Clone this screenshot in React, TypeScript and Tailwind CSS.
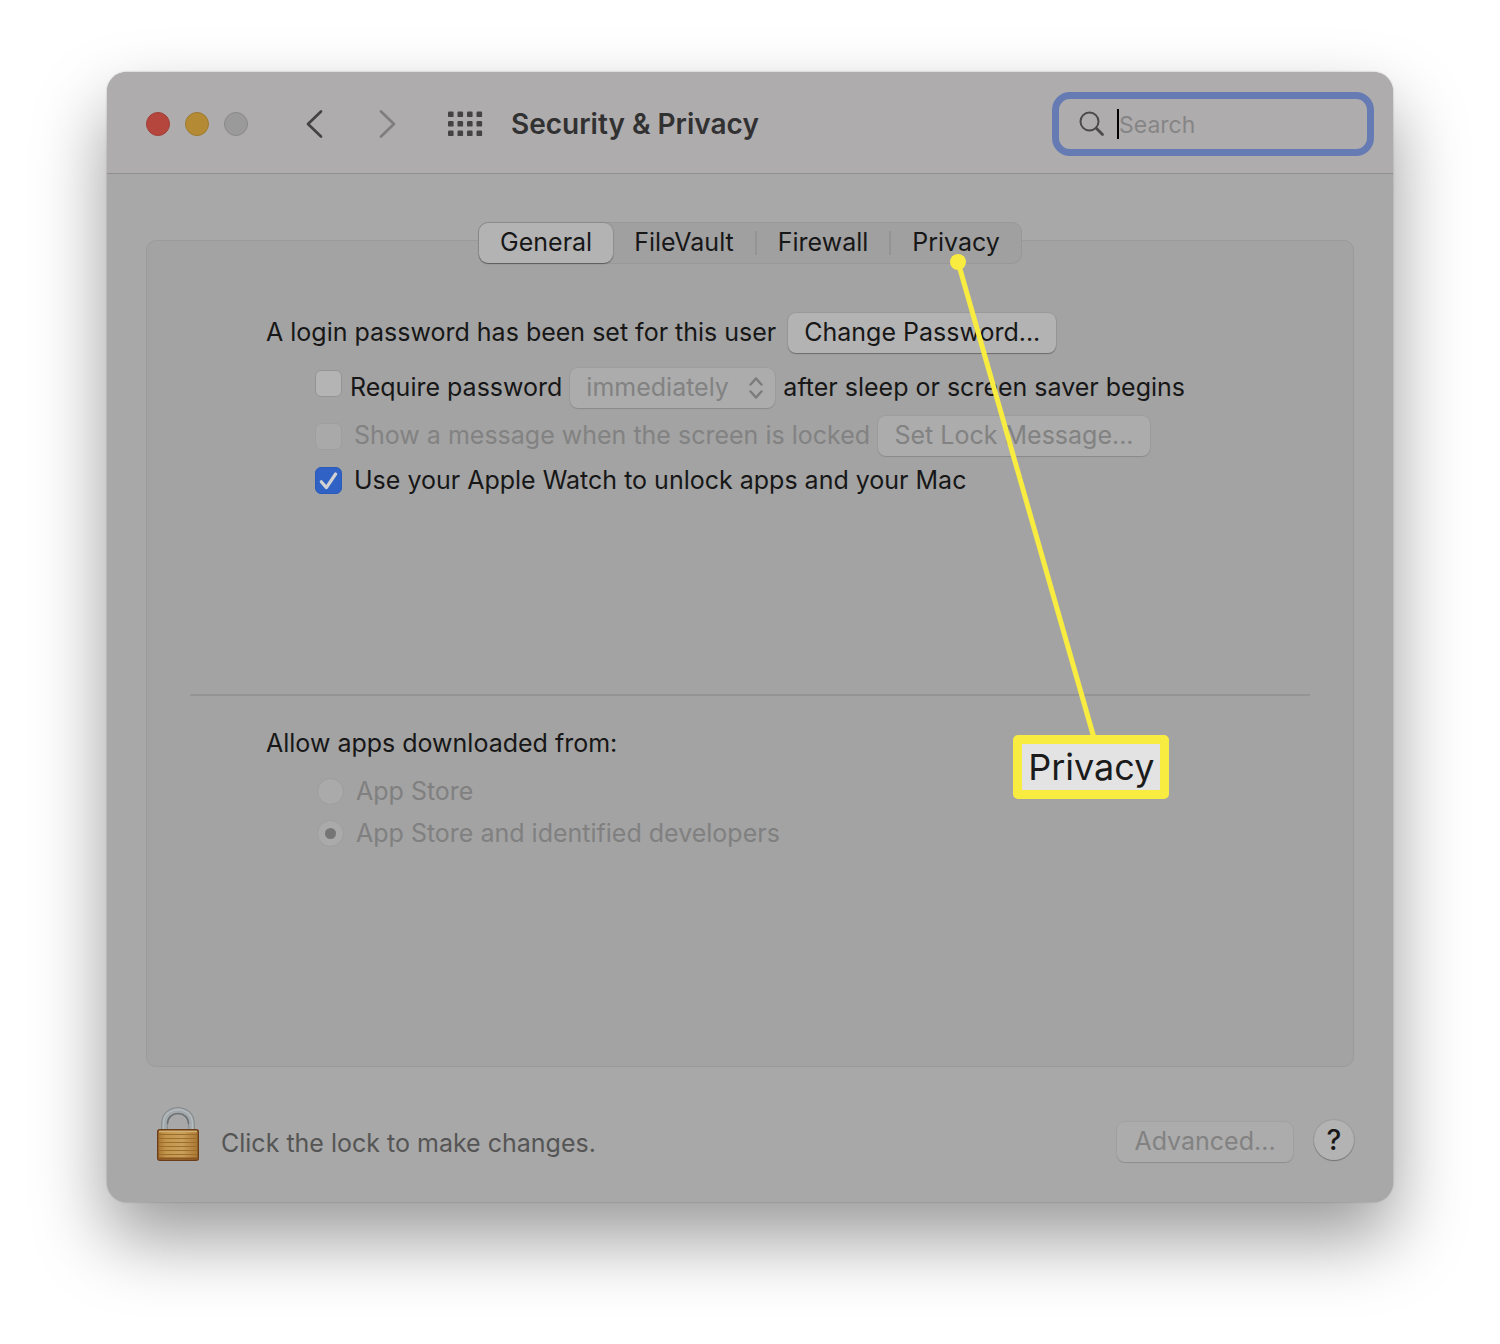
import { useState } from "react";
import clsx from "clsx";

const TABS = ["General", "FileVault", "Firewall", "Privacy"];

const SOURCES = [
    { id: "app-store", label: "App Store" },
    { id: "identified", label: "App Store and identified developers" },
];

function PushButton({ children, disabled, className }: { children: string; disabled?: boolean; className?: string }) {
    return (
        <button
            disabled={disabled}
            className={clsx(
                "h-10 pb-0.5 rounded-lg text-center whitespace-nowrap shrink-0",
                disabled
                    ? "bg-[#acacac] text-[#828282] shadow-[0_0_1px_1px_rgba(0,0,0,0.04),0_1px_1px_rgba(0,0,0,0.12)]"
                    : "bg-[#b3b3b3] text-[#171717] shadow-[0_0_1px_1px_rgba(0,0,0,0.06),0_1px_1px_rgba(0,0,0,0.3)]",
                className
            )}
        >
            {children}
        </button>
    );
}

function Checkbox({ id, checked, disabled, onChange, className }: { id: string; checked: boolean; disabled?: boolean; onChange?: () => void; className?: string }) {
    return (
        <span className={clsx("relative w-[27px] h-[27px] shrink-0", className)}>
            <input
                id={id}
                type="checkbox"
                checked={checked}
                disabled={disabled}
                onChange={onChange}
                className="block appearance-none w-[27px] h-[27px] rounded-md border border-[#949494] bg-[#b4b4b4] checked:bg-[#2f62c4] checked:border-[#2b5bb8] disabled:bg-[#a9a9a9] disabled:border-[#9e9e9e]"
            />
            {checked && (
                <svg viewBox="0 0 27 27" className="absolute inset-0 pointer-events-none" fill="none" stroke="#d2d2d2" strokeWidth="3.2" strokeLinecap="round" strokeLinejoin="round">
                    <path d="M6.3 14.8 L11.4 20.6 L20.6 7" />
                </svg>
            )}
        </span>
    );
}

function LockIcon() {
    return (
        <svg width="44" height="55" viewBox="0 0 44 55" fill="none">
            <defs>
                <linearGradient id="brass" x1="0" y1="0" x2="1" y2="0">
                    <stop offset="0" stopColor="#a87430" />
                    <stop offset="0.2" stopColor="#c2954b" />
                    <stop offset="0.6" stopColor="#c9a05a" />
                    <stop offset="1" stopColor="#a9752f" />
                </linearGradient>
            </defs>
            <path d="M8.5 24 V16.5 C8.5 -1 35.5 -1 35.5 16.5 V24" stroke="#7c8386" strokeWidth="6.4" />
            <path d="M8.5 24 V16.5 C8.5 -1 35.5 -1 35.5 16.5 V24" stroke="#a2a8ab" strokeWidth="4.8" />
            <path d="M7.5 24 V16.5 C7.5 -2 36.5 -2 36.5 16.5 V24" stroke="#b4babd" strokeWidth="1.5" />
            <path d="M11.6 17 C11.6 3.2 32.4 3.2 32.4 17" stroke="#676c6f" strokeWidth="1.4" />
            <rect x="1.7" y="22.7" width="40.6" height="30.6" rx="2" fill="url(#brass)" stroke="#6b3d18" strokeWidth="1.4" />
            <path d="M3 24.5 H41" stroke="#d3b070" strokeWidth="1.4" />
            <path d="M3 27.5 H41 M3 31.5 H41 M3 35.5 H41 M3 39.5 H41 M3 43.5 H41 M3 47.5 H41" stroke="#9c6d2e" strokeWidth="1" />
            <path d="M3 51.5 H41" stroke="#8a5521" strokeWidth="2" />
        </svg>
    );
}

function TitleBar() {
    return (
        <header className="flex items-center h-[102px] pt-0.5 pl-[39px] pr-[19px] bg-[#aeacad] border-b border-[#8f8f8f] rounded-t-[20px]">
            <div className="flex gap-[15px]">
                <button aria-label="Close" className="w-6 h-6 rounded-full bg-[#b5463e] border border-[#9f3f38]" />
                <button aria-label="Minimize" className="w-6 h-6 rounded-full bg-[#b48a34] border border-[#9d7a30]" />
                <button aria-label="Zoom" disabled className="w-6 h-6 rounded-full bg-[#9b9a9b] border border-[#8b8a8b]" />
            </div>
            <button aria-label="Back" className="ml-[57px]">
                <svg width="20" height="30" viewBox="0 0 20 30" fill="none" stroke="#444344" strokeWidth="2.7" strokeLinecap="round" strokeLinejoin="round">
                    <path d="M16 2.5 L3 15 L16 27.5" />
                </svg>
            </button>
            <button aria-label="Forward" disabled className="ml-[53px]">
                <svg width="20" height="30" viewBox="0 0 20 30" fill="none" stroke="#7f7e7f" strokeWidth="2.7" strokeLinecap="round" strokeLinejoin="round">
                    <path d="M3 2.5 L16 15 L3 27.5" />
                </svg>
            </button>
            <button aria-label="Show All" className="ml-[49px]">
                <svg width="36" height="26" viewBox="0 0 36 26" fill="#444344">
                    {[0, 1, 2].map(row =>
                        [0, 1, 2, 3].map(col => <rect key={`${row}-${col}`} x={1 + col * 9.5} y={0.5 + row * 9.5} width="5.6" height="5.6" rx="1.2" />)
                    )}
                </svg>
            </button>
            <h1 className="ml-7 text-[28px] leading-8 font-semibold text-[#323132] whitespace-nowrap">Security &amp; Privacy</h1>
            <label className="ml-auto flex items-center w-[322px] h-16 pl-5 border-[7px] border-[#667bb3] rounded-[18px] bg-[#aeacad]">
                <svg width="26" height="26" viewBox="0 0 26 26" fill="none" stroke="#4b4a4b" strokeLinecap="round" className="shrink-0">
                    <circle cx="10.5" cy="10.5" r="9" strokeWidth="2" />
                    <path d="M17.3 17.3 L23.5 23.5" strokeWidth="2.8" />
                </svg>
                <span className="w-0.5 h-[30px] ml-3 bg-black shrink-0" />
                <input type="search" aria-label="Search" placeholder="Search" className="min-w-0 flex-1 pt-0.5 bg-transparent outline-none text-[23px] text-[#171717] placeholder:text-[#868586]" />
            </label>
        </header>
    );
}

// Pointer that runs from the Privacy tab down to its enlarged label
function PrivacyCallout() {
    return (
        <div className="absolute top-[31px] left-[61px] w-[220px] pointer-events-none z-10">
            <svg width="160" height="484" viewBox="0 0 160 484" fill="none" className="block">
                <path d="M8 8 L144 484" stroke="#f9ec41" strokeWidth="5" />
                <circle cx="8" cy="8" r="8" fill="#f9ec41" />
            </svg>
            <div className="ml-[63px] -mt-[3px] w-[156px] h-16 border-[9px] border-[#f9ec41] rounded-[5px] bg-[#e3e3e3] flex items-center justify-center text-[36px] leading-[46px] text-[#1b1b1b]">
                Privacy
            </div>
        </div>
    );
}

export default function App() {
    const [tab, setTab] = useState("General");
    const [requirePassword, setRequirePassword] = useState(false);
    const [watchUnlock, setWatchUnlock] = useState(true);

    return (
        <div className="bg-white px-[107px] pt-[72px] pb-[142px] font-['Inter',sans-serif] text-[25px] leading-8 text-[#171717]">
            <div className="rounded-[20px] bg-[#a8a8a8] shadow-[0_0_2px_rgba(0,0,0,0.3),0_36px_72px_rgba(0,0,0,0.4)]">
                <TitleBar />

                <main className="px-[39px] pt-12">
                    <div className="relative flex justify-center">
                        <div role="tablist" className="flex h-[42px] rounded-[10px] bg-[#a0a0a0] border border-[#989898]">
                            {TABS.map((name, i) => (
                                <div key={name} className="relative flex items-center">
                                    {i > 1 && <span className="w-0.5 h-6 bg-[#949494]" />}
                                    <button
                                        role="tab"
                                        aria-selected={tab === name}
                                        onClick={() => setTab(name)}
                                        className={clsx(
                                            "h-10 px-[21px] pb-0.5 rounded-[9px]",
                                            tab === name && "bg-[#b3b3b3] shadow-[0_0_1px_1px_rgba(0,0,0,0.08),0_1px_1px_rgba(0,0,0,0.35)]"
                                        )}
                                    >
                                        {name}
                                    </button>
                                    {name === "Privacy" && <PrivacyCallout />}
                                </div>
                            ))}
                        </div>
                    </div>

                    <div className="-mt-6 min-h-[827px] rounded-[10px] border border-[#9b9b9b] bg-[#a3a3a3] pt-18">
                        <section className="min-h-[381px] pl-[119px]">
                            <div className="flex items-center">
                                <p className="pb-0.5 whitespace-nowrap">A login password has been set for this user</p>
                                <PushButton className="ml-3 w-[268px]">Change Password...</PushButton>
                            </div>
                            <div className="flex items-center pl-[49px] mt-[15px] whitespace-nowrap">
                                <Checkbox id="require" checked={requirePassword} onChange={() => setRequirePassword(!requirePassword)} className="self-start mt-0.5" />
                                <label htmlFor="require" className="ml-2 pb-0.5">Require password</label>
                                <span className="relative ml-2 shrink-0">
                                    <select
                                        disabled
                                        aria-label="Require password delay"
                                        className="block appearance-none w-[205px] h-10 pl-4 pb-0.5 rounded-lg bg-[#acacac] text-[#828282] opacity-100 shadow-[0_0_1px_1px_rgba(0,0,0,0.04),0_1px_1px_rgba(0,0,0,0.12)]"
                                    >
                                        <option>immediately</option>
                                    </select>
                                    <svg width="14" height="22" viewBox="0 0 14 22" fill="none" stroke="#7b7b7b" strokeWidth="2.4" strokeLinecap="round" strokeLinejoin="round" className="absolute right-3 top-[9px] pointer-events-none">
                                        <path d="M1.5 7.5 L7 1.5 L12.5 7.5 M1.5 14.5 L7 20.5 L12.5 14.5" />
                                    </svg>
                                </span>
                                <span className="ml-2 pb-0.5">after sleep or screen saver begins</span>
                            </div>
                            <div className="flex items-center pl-[49px] mt-2 whitespace-nowrap">
                                <Checkbox id="message" checked={false} disabled />
                                <label htmlFor="message" className="ml-3 pb-0.5 text-[#828282]">Show a message when the screen is locked</label>
                                <PushButton disabled className="ml-2 w-[272px]">Set Lock Message...</PushButton>
                            </div>
                            <div className="flex items-center pl-[49px] mt-2 whitespace-nowrap">
                                <Checkbox id="watch" checked={watchUnlock} onChange={() => setWatchUnlock(!watchUnlock)} />
                                <label htmlFor="watch" className="ml-3">Use your Apple Watch to unlock apps and your Mac</label>
                            </div>
                        </section>

                        <hr className="mx-[43px] border-t-2 border-[#949494]" />

                        <fieldset className="pl-[119px] pt-[31px]">
                            <legend className="float-left w-full">Allow apps downloaded from:</legend>
                            <div className="clear-both flex flex-col gap-2.5 pl-[51px] pt-4">
                                {SOURCES.map(source => (
                                    <div key={source.id} className="flex items-center">
                                        <input
                                            id={source.id}
                                            type="radio"
                                            name="source"
                                            disabled
                                            defaultChecked={source.id === "identified"}
                                            className="appearance-none grid place-items-center w-[27px] h-[27px] rounded-full border border-[#9d9d9d] bg-[#aaaaaa] checked:before:content-[''] checked:before:w-[11px] checked:before:h-[11px] checked:before:rounded-full checked:before:bg-[#757575]"
                                        />
                                        <label htmlFor={source.id} className="ml-3 text-[#808080]">{source.label}</label>
                                    </div>
                                ))}
                            </div>
                        </fieldset>
                    </div>
                </main>

                <footer className="flex items-end px-[39px] pt-10 pb-10">
                    <button aria-label="Unlock" className="ml-2.5">
                        <LockIcon />
                    </button>
                    <p className="ml-[21px] mb-[3px] text-[#555555]">Click the lock to make changes.</p>
                    <PushButton disabled className="ml-auto w-[176px]">Advanced...</PushButton>
                    <button aria-label="Help" className="ml-[21px] w-10 h-10 mb-0.5 rounded-full bg-[#b3b3b3] text-[28px] font-medium shadow-[0_0_1px_1px_rgba(0,0,0,0.08),0_1px_1px_rgba(0,0,0,0.25)]">
                        ?
                    </button>
                </footer>
            </div>
        </div>
    );
}
